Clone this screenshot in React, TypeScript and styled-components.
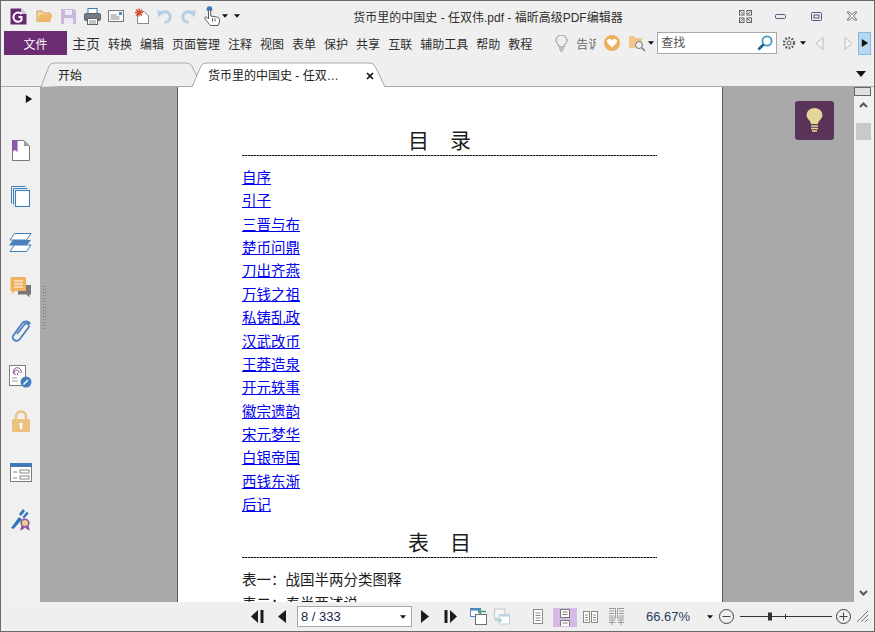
import React from "react";
import styled, { createGlobalStyle } from "styled-components";

const Global = createGlobalStyle`
  html, body { margin: 0; padding: 0; background: #efefef; overflow: hidden; }
  * { box-sizing: border-box; }
`;

const UI_FONT = `"Liberation Sans", "Noto Sans CJK SC", sans-serif`;
const DOC_FONT = `"Liberation Serif", "Noto Sans CJK SC", serif`;

const Win = styled.div`
  width: 875px; height: 632px; border: 1px solid #6a6a6a; background: #efefef;
  display: flex; flex-direction: column; font-family: ${UI_FONT}; color: #333; overflow: hidden;
`;
const TitleRow = styled.div`height: 30px; display: flex; align-items: center; flex: none;`;
const Slot = styled.span<{ $w: number; $ml?: number; $active?: boolean }>`
  display: flex; align-items: center; justify-content: center; flex: none;
  width: ${p => p.$w}px; margin-left: ${p => p.$ml ?? 0}px;
  align-self: ${p => (p.$active ? "flex-start" : "stretch")};
  height: ${p => (p.$active ? "19px" : "auto")};
  margin-top: ${p => (p.$active ? "6px" : "0")};
  overflow: ${p => (p.$active ? "hidden" : "visible")};
  background: ${p => (p.$active ? "#d6b9e6" : "transparent")};
`;
const Title = styled.div`
  width: 272px; margin-left: 112px; flex: none; font-size: 12px; white-space: nowrap; color: #2e2e2e; text-align: center;
`;
const MenuRow = styled.div`height: 24px; display: flex; align-items: center; flex: none; padding-left: 3px;`;
const FileButton = styled.div`
  width: 63px; height: 24px; background: #6b2c72; color: #fff; font-size: 12px;
  display: flex; align-items: center; justify-content: center; flex: none;
`;
const Menus = styled.div`display: flex; gap: 8px; margin-left: 5px; align-items: center;`;
const Menu = styled.span<{ $big?: boolean }>`font-size: ${p => (p.$big ? 14 : 12)}px; white-space: nowrap; color: #2f2f2f;`;
const Clip = styled.span`
  width: 20px; margin-left: 8px; overflow: hidden; white-space: nowrap; font-size: 12px; color: #666; flex: none;
`;
const SearchBox = styled.label`
  width: 120px; height: 22px; border: 1px solid #a8a8a8; background: #fff; flex: none;
  display: flex; align-items: center; padding: 0 3px 0 3px; margin-left: 3px;
`;
const SearchInput = styled.input`
  flex: 1; min-width: 0; border: 0; outline: 0; padding: 0; background: transparent; font: 12px ${UI_FONT};
  &::placeholder { color: #555; opacity: 1; }
`;
const Collapse = styled.div`
  width: 13px; height: 23px; margin-left: 5px; flex: none; background: #b5d9f5; border: 1px solid #8ab9de;
  display: flex; align-items: center; justify-content: center;
`;
const TabRow = styled.div`
  height: 32px; flex: none; display: flex; align-items: flex-end; padding-left: 39px; position: relative;
  border-bottom: 1px solid #a9a9a9;
`;
const Tab = styled.div<{ $w: number; $ml?: number; $active?: boolean }>`
  position: relative; width: ${p => p.$w}px; height: 25px; flex: none; margin-left: ${p => p.$ml ?? 0}px;
  margin-bottom: -1px; font-size: 12px; color: #222; display: flex; align-items: center; z-index: ${p => (p.$active ? 2 : 1)};
`;
const TabShape = styled.svg`position: absolute; inset: 0; width: 100%; height: 100%;`;
const TabLabel = styled.span<{ $pl: number }>`position: relative; padding-left: ${p => p.$pl}px; white-space: nowrap;`;
const TabClose = styled.span`position: absolute; right: 11px; top: 10px; display: flex;`;
const TabMenu = styled.span`position: absolute; right: 8px; top: 14px; display: flex;`;
const Main = styled.div`flex: 1; min-height: 0; display: flex; padding-right: 2px;`;
const Rail = styled.div`width: 39px; flex: none; background: #f0f0f0; display: flex; flex-direction: column;`;
const RailArrow = styled.div`height: 24px; display: flex; align-items: center; justify-content: flex-end; padding-right: 7px; margin-bottom: 16px;`;
const RailSlot = styled.div<{ $h: number }>`height: ${p => p.$h}px; display: flex; align-items: center; justify-content: center;`;
const Doc = styled.div`flex: 1; min-width: 0; background: #a9a9a9; position: relative; overflow: hidden;`;
const Grip = styled.div`
  position: absolute; left: 2px; top: 198px; width: 5px; height: 44px;
  background-image: radial-gradient(#6e6e6e 0.7px, transparent 0.8px);
  background-size: 2.5px 3px;
`;
const Page = styled.div`
  width: 546px; height: 100%; margin-left: 137px; background: #fff; border: solid #5a5a5a; border-width: 0 1px;
  padding: 41px 64px 0 64px; font-family: ${DOC_FONT}; color: #1d1d1d;
`;
const Heading = styled.div<{ $mt?: number }>`
  width: 415px; height: 28px; margin-top: ${p => p.$mt ?? 0}px; padding-right: 20px; font-size: 21px; line-height: 27px; text-align: center;
  background: repeating-linear-gradient(90deg, #111 0 2px, #8a8a8a 2px 3px) bottom / 100% 1px no-repeat;
`;
const LinkList = styled.div`margin-top: 11px; display: flex; flex-direction: column;`;
const DocLink = styled.a`height: 23.36px; line-height: 23.36px; font-size: 14.5px; color: #0000ee; text-decoration: underline; width: max-content;`;
const DocLine = styled.div<{ $mt?: number }>`height: 23.36px; line-height: 23.36px; font-size: 14.5px; margin-top: ${p => p.$mt ?? 0}px; white-space: nowrap;`;
const Hint = styled.div`
  position: absolute; left: 755px; top: 14px; width: 39px; height: 39px; border-radius: 3px; background: #5a3358;
  display: flex; align-items: center; justify-content: center;
`;
const Scroll = styled.div`width: 18px; flex: none; background: #f0f0f0; display: flex; flex-direction: column; align-items: center;`;
const ScrollSplit = styled.div`width: 17px; height: 9px; margin-top: 0; background: #e0e0e0; border: 1px solid #666; align-self: flex-start;`;
const ScrollArrow = styled.div`height: 18px; display: flex; align-items: center; justify-content: center;`;
const ScrollThumb = styled.div`width: 15px; height: 17px; margin-top: 9px; background: #c9c9c9;`;
const ScrollTrack = styled.div`flex: 1;`;
const Status = styled.div`height: 29px; flex: none; display: flex; align-items: stretch; padding-left: 246px; background: #efefef; font-size: 13px;`;
const PageBox = styled.div`
  width: 115px; flex: none; height: 21px; align-self: center; border: 1px solid #a8a8a8; background: #fff; color: #16264a;
  display: flex; align-items: center; justify-content: space-between; padding: 0 5px 0 3px; font-size: 13px;
`;
const Zoom = styled.span`width: 44px; margin-left: 18px; flex: none; align-self: center; color: #2c3d5c; font-size: 13px; white-space: nowrap;`;

const Tri = ({ d = "r", s = 8, c = "#111" }: { d?: "r" | "l" | "d" | "u"; s?: number; c?: string }) => {
  const pts = { r: "1,0 9,5 1,10", l: "9,0 1,5 9,10", d: "0,2 10,2 5,8", u: "0,8 10,8 5,2" }[d];
  return <svg width={s} height={s} viewBox="0 0 10 10"><polygon points={pts} fill={c} /></svg>;
};
const Svg = ({ w, h, children }: { w: number; h: number; children: React.ReactNode }) => (
  <svg width={w} height={h} viewBox={`0 0 ${w} ${h}`} fill="none">{children}</svg>
);

const Logo = () => (
  <Svg w={17} h={17}>
    <path d="M0.5 0.5H11L16.5 6V16.5H0.5Z" fill="#652a70" />
    <path d="M11 .5L16.5 6H11Z" fill="#d8c4dc" />
    <path d="M11.5 6.2A4.6 4.6 0 1 0 11.5 12.2V9H8.5" stroke="#fff" strokeWidth="2" />
  </Svg>
);
const Folder = () => (
  <Svg w={17} h={14}>
    <path d="M1 13V2h5l1.5 2H14v2" stroke="#cfa056" fill="#f4d79f" />
    <path d="M1 13l3-7.5h12.5L14 13Z" fill="#eeb868" />
  </Svg>
);
const Save = () => (
  <Svg w={15} h={15}>
    <path d="M0 0H13L15 2V15H0Z" fill="#c9b6d8" />
    <rect x="4" y="1" width="7" height="5" fill="#efe9f3" />
    <rect x="3" y="9" width="9" height="6" fill="#efe9f3" />
  </Svg>
);
const Print = () => (
  <Svg w={17} h={17}>
    <rect x="4" y="0.5" width="9" height="5" fill="#fff" stroke="#3e79b8" />
    <rect x="0.5" y="5.5" width="16" height="7" rx="1" fill="#757b82" stroke="#5d6369" />
    <rect x="3.5" y="10.5" width="10" height="6" fill="#fff" stroke="#5d6369" />
    <path d="M5 13h7M5 15h7" stroke="#8a8a8a" />
  </Svg>
);
const Mail = () => (
  <Svg w={16} h={12}>
    <rect x="0.5" y="0.5" width="15" height="11" fill="#fbfbfb" stroke="#777" />
    <rect x="11" y="2" width="3" height="3" fill="#5586bf" />
    <path d="M2.5 5h6M2.5 7h9M2.5 9h9" stroke="#8a8a8a" />
  </Svg>
);
const NewDoc = () => (
  <Svg w={15} h={16}>
    <path d="M3.5 3.5H10L14.5 8V15.5H3.5Z" fill="#fff" stroke="#888" />
    <path d="M5 .5v8M1 4.5h8M2 1.5l6 6M8 1.5l-6 6" stroke="#d9502c" strokeWidth="1.4" />
  </Svg>
);
const Undo = ({ flip }: { flip?: boolean }) => (
  <svg width="16" height="15" viewBox="0 0 16 15" fill="none" style={flip ? { transform: "scaleX(-1)" } : undefined}>
    <path d="M3.500 5A5.300 5.300 0 1 1 7.500 13.300" stroke="#b9cfe6" strokeWidth="3" />
    <path d="M0 1.500L7.500 2 1.500 8.500Z" fill="#b9cfe6" />
  </svg>
);
const Hand = () => (
  <Svg w={16} h={20}>
    <circle cx="5.500" cy="3" r="2.800" fill="#3d79b6" />
    <path d="M4.500 9V5.200c0-1.600 2.200-1.600 2.200 0V10l6 1c1.700.3 2.800 1.100 2.800 2.600V16l-1.500 3.500H6.500L1 13c-1-1.500.8-2.800 2-1.500L4.500 13Z" fill="#fff" stroke="#5b5b5b" />
    <path d="M8.500 12v3.500M11 12.500v3" stroke="#5b5b5b" />
  </Svg>
);
const Expand = () => (
  <svg width="13" height="13" viewBox="0 0 13 13" fill="none" stroke="#666">
    <rect x="0.5" y="0.5" width="4.5" height="4.5" /><rect x="8" y="0.5" width="4.5" height="4.5" />
    <rect x="0.5" y="8" width="4.5" height="4.5" /><rect x="8" y="8" width="4.5" height="4.5" />
    <path d="M1.5 1.5l2.5 2.5M11.5 1.5L9 4M1.5 11.5L4 9M11.5 11.5L9 9" />
  </svg>
);
const Minimize = () => <Svg w={11} h={5}><rect x="0.5" y="0.5" width="10" height="4" rx="1" stroke="#4e5d7a" /></Svg>;
const Restore = () => (
  <Svg w={11} h={9}><rect x="0.5" y="0.5" width="10" height="8" rx="1" stroke="#4e5d7a" /><rect x="3" y="3" width="5" height="3" stroke="#4e5d7a" /></Svg>
);
const CloseWin = () => (
  <Svg w={12} h={10}><path d="M1 1h2.5L6 3.5 8.5 1H11L7.5 5 11 9H8.5L6 6.5 3.5 9H1L4.5 5Z" fill="#fff" stroke="#6a6a6a" /></Svg>
);
const Bulb = ({ c = "#8b8b8b" }: { c?: string }) => (
  <Svg w={13} h={17}>
    <path d="M4 12C4 9 1 8.500 1 5.500A5.500 5.500 0 0 1 12 5.500C12 8.500 9 9 9 12Z" stroke={c} />
    <path d="M4 14h5M5 16h3" stroke={c} />
  </Svg>
);
const Heart = () => (
  <Svg w={16} h={16}>
    <circle cx="8" cy="8" r="8" fill="#edb05e" />
    <path d="M8 12.500L3.500 8C2 6 3.500 4 5.500 4 6.700 4 7.500 4.700 8 5.500 8.500 4.700 9.300 4 10.500 4 12.500 4 14 6 12.500 8Z" fill="#fff" />
  </Svg>
);
const FolderFind = () => (
  <Svg w={17} h={17}>
    <path d="M0 13V1h5l1.500 2H13v7H8L6 13Z" fill="#edc78b" />
    <circle cx="10" cy="10" r="3.500" fill="#efefef" stroke="#777" />
    <path d="M12.500 12.500L16 16" stroke="#777" strokeWidth="1.400" />
  </Svg>
);
const Lens = () => (
  <Svg w={16} h={16}>
    <circle cx="10" cy="6" r="4.600" stroke="#3d9bc6" strokeWidth="1.800" />
    <path d="M6.500 9.500L1.500 14.500" stroke="#25598f" strokeWidth="2.600" />
  </Svg>
);
const Gear = () => (
  <Svg w={14} h={14}>
    <circle cx="7" cy="7" r="2" stroke="#555" />
    <circle cx="7" cy="7" r="5" stroke="#555" strokeWidth="2.400" strokeDasharray="1.600 1.600" />
  </Svg>
);
const Outline = ({ left }: { left?: boolean }) => (
  <Svg w={9} h={13}>
    <polygon points={left ? "8,0.500 8,12.500 1,6.500" : "1,0.500 1,12.500 8,6.500"} stroke="#bdbdbd" fill="#f4f4f4" />
  </Svg>
);
const XMark = () => <Svg w={8} h={8}><path d="M1 1l6 6M7 1L1 7" stroke="#111" strokeWidth="1.700" /></Svg>;

const RBookmark = () => (
  <Svg w={18} h={21}>
    <path d="M.5 0.500H12L17.500 6V20.500H.5Z" fill="#fff" stroke="#7a7a7a" />
    <path d="M12 .5V6H17.500Z" fill="#9b9b9b" />
    <path d="M0 0H5.500V12L2.800 10 0 12Z" fill="#8c55a8" />
  </Svg>
);
const RPages = () => (
  <svg width="19" height="21" viewBox="0 0 19 21" fill="none" stroke="#3f7fbd">
    <path d="M.5 17.500V.5H14.500" /><path d="M2.500 18.500V2.500H16.500" />
    <rect x="4.500" y="4.500" width="14" height="16" fill="#fff" strokeWidth="1.100" />
  </svg>
);
const RLayers = () => (
  <Svg w={23} h={19}>
    <path d="M5.500 .5H22L17.500 7H1Z" fill="#fff" stroke="#3f7fbd" />
    <path d="M4 7H22L17.500 12.500H0Z" fill="#4d80ba" />
    <path d="M5.500 12H22L17.500 18.500H1Z" fill="#fff" stroke="#3f7fbd" />
  </Svg>
);
const RComment = () => (
  <Svg w={22} h={21}>
    <path d="M8 8H21V17.500H19.500V20.500L16.500 17.500H8Z" fill="#777" />
    <path d="M.5 0H16V14H5L2 17V14H.5Z" fill="#efb25f" />
    <path d="M4 4H13M4 7H13M4 10H13" stroke="#fff" />
  </Svg>
);
const RClip = () => (
  <Svg w={20} h={23}>
    <path d="M6 14L13.500 4.500C15.500 2 19 4.500 17.500 7.500L8.500 19.500C6 22.500 .5 20 2 16L11 3.500C13 .5 18 1 19 4" stroke="#4b82be" strokeWidth="1.800" />
  </Svg>
);
const RSign = () => (
  <Svg w={23} h={23}>
    <rect x="0.500" y="0.500" width="16" height="20" fill="#fff" stroke="#7c7c7c" />
    <path d="M5 9A4 4 0 1 1 12 8M7 10A2.500 2.500 0 1 1 10 8M8.500 8V10" stroke="#8c55a8" />
    <path d="M3 13H8M3 16H9" stroke="#999" />
    <circle cx="17" cy="17" r="5.500" fill="#3f7fbd" />
    <path d="M14.500 19.500L19 15" stroke="#fff" strokeWidth="1.500" />
  </Svg>
);
const RLock = () => (
  <Svg w={18} h={22}>
    <path d="M4 10V6.500A5 5 0 0 1 14 6.500V10" stroke="#ecc27f" strokeWidth="2.500" />
    <rect x="0" y="9" width="18" height="13" rx="1.500" fill="#ecc27f" />
    <path d="M7.500 13H10.500L10 19H8Z" fill="#fff" />
  </Svg>
);
const RForm = () => (
  <Svg w={22} h={19}>
    <rect x="0.500" y="0.500" width="21" height="18" fill="#fff" stroke="#7c7c7c" />
    <rect width="22" height="4" fill="#4279b6" />
    <rect x="10" y="7" width="9" height="3" stroke="#8a8a8a" /><rect x="10" y="13" width="9" height="3" stroke="#8a8a8a" />
    <path d="M3 9H7M3 15H7" stroke="#8a8a8a" />
  </Svg>
);
const RSeal = () => (
  <Svg w={21} h={23}>
    <path d="M1 20L9 9 12 11.500 3.500 21Z" fill="#2f75b8" />
    <path d="M9 6L13 1 15 3 11 8ZM12.500 9L17 3.500 18.500 5.500 14 10.500Z" fill="#2f75b8" />
    <circle cx="15" cy="15" r="3.800" fill="#e7d27e" stroke="#8c55a8" strokeWidth="1.600" />
    <path d="M11.500 18L10 22.500 13.500 21 15 19 16.500 21 20 22.500 18.500 18Z" fill="#8c55a8" />
  </Svg>
);
const HintBulb = () => (
  <Svg w={17} h={25}>
    <path d="M5 16C5 12.500 .5 11 .5 7A8 7 0 0 1 16.500 7C16.500 11 12 12.500 12 16Z" fill="#e2d69a" />
    <path d="M5 18H12M5 20.500H12" stroke="#e2d69a" strokeWidth="1.600" /><path d="M6 23H11" stroke="#e2d69a" strokeWidth="1.600" />
  </Svg>
);
const Chevron = ({ up }: { up?: boolean }) => (
  <Svg w={9} h={6}><path d={up ? "M1 5L4.500 1.500 8 5" : "M1 1L4.500 4.500 8 1"} stroke="#555" strokeWidth="2" /></Svg>
);

const First = ({ flip }: { flip?: boolean }) => (
  <svg width="13" height="13" viewBox="0 0 13 13" style={flip ? { transform: "scaleX(-1)" } : undefined}>
    <polygon points="7,0 7,13 0,6.500" fill="#1d1d1d" /><rect x="9.500" y="0" width="3" height="13" fill="#1d1d1d" />
  </svg>
);
const Prev = ({ flip }: { flip?: boolean }) => (
  <svg width="8" height="13" viewBox="0 0 8 13" style={flip ? { transform: "scaleX(-1)" } : undefined}>
    <polygon points="8,0 8,13 0,6.500" fill="#1d1d1d" />
  </svg>
);
const ViewBack = () => (
  <Svg w={17} h={17}>
    <rect x="0.500" y="0.500" width="10" height="8" fill="#fff" stroke="#4f86c0" />
    <rect x="0.500" y="0.500" width="10" height="2" fill="#4f86c0" />
    <rect x="5.500" y="6.500" width="11" height="10" fill="#fff" stroke="#6e6e6e" />
    <path d="M8 3.500H16M8 3.500L11 1M8 3.500L11 6" stroke="#4f9c8c" strokeWidth="1.500" />
  </Svg>
);
const ViewFwd = () => (
  <Svg w={17} h={17}>
    <rect x="0.500" y="0.500" width="11" height="10" fill="#f6f6f6" stroke="#c4c4c4" />
    <rect x="5.500" y="6.500" width="11" height="10" fill="#fff" stroke="#bcd0e6" />
    <rect x="5.500" y="6.500" width="11" height="2" fill="#bcd0e6" />
    <path d="M1 12.500H8M8 12.500L5.500 10.500M8 12.500L5.500 14.500" stroke="#a9d3c7" strokeWidth="1.500" />
  </Svg>
);
const Lines = "M2.500 4H7.500M2.500 6.500H7.500M2.500 9H7.500M2.500 11.500H7.500";
const VSingle = () => (
  <Svg w={10} h={15}><rect x="0.500" y="0.500" width="9" height="14" stroke="#8a8a8a" fill="#fff" /><path d={Lines} stroke="#8a8a8a" /></Svg>
);
const VCont = () => (
  <Svg w={10} h={17}>
    <rect x="0.500" y="0.500" width="9" height="8" stroke="#777" fill="#fff" /><path d="M2.500 3H7.500M2.500 5.500H7.500" stroke="#777" />
    <path d="M0.500 17V11.500H9.500V17M2.500 14H7.500" stroke="#777" fill="#fff" />
  </Svg>
);
const VFacing = () => (
  <Svg w={15} h={12}>
    <rect x="0.500" y="0.500" width="6" height="11" stroke="#8a8a8a" fill="#fff" /><rect x="8.500" y="0.500" width="6" height="11" stroke="#8a8a8a" fill="#fff" />
    <path d="M2 4H5M2 6.500H5M2 9H5M10 4H13M10 6.500H13M10 9H13" stroke="#8a8a8a" />
  </Svg>
);
const VFacingCont = () => (
  <Svg w={15} h={17}>
    <path d="M0 .5H6.500V10H0M0 3H5M0 5.500H5M0 8H5M8.500 .5H15M8.500 .5V10H15M10 3H15M10 5.500H15M10 8H15M0 12H6.500M8.500 12H15M3 12V17M12 12V17M0 14.500H6.500M8.500 14.500H15" stroke="#9a9a9a" />
  </Svg>
);
const Round = ({ plus }: { plus?: boolean }) => (
  <Svg w={15} h={15}>
    <circle cx="7.500" cy="7.500" r="7" stroke="#444" />
    <path d={plus ? "M3.500 7.500H11.500M7.500 3.500V11.500" : "M3.500 7.500H11.500"} stroke="#444" />
  </Svg>
);
const SliderArt = () => (
  <Svg w={92} h={9}>
    <path d="M0 4.500H92" stroke="#333" />
    <rect x="28" y="0.500" width="4" height="8" fill="#333" />
    <path d="M45.500 2V7" stroke="#333" />
  </Svg>
);
const SizeGrip = () => (
  <Svg w={13} h={13}><path d="M1 12L12 1M5 12L12 5M9 12L12 9" stroke="#777" /></Svg>
);

const links = ["自序","引子","三晋与布","楚币问鼎","刀出齐燕","万钱之祖","私铸乱政","汉武改币","王莽造泉","开元轶事","徽宗遗韵","宋元梦华","白银帝国","西钱东渐","后记"];
const menus = ["转换","编辑","页面管理","注释","视图","表单","保护","共享","互联","辅助工具","帮助","教程"];

export default function App() {
  return (
    <Win>
      <Global />
      <TitleRow>
        <Slot $w={17} $ml={9}><Logo /></Slot>
        <Slot $w={18} $ml={8}><Folder /></Slot>
        <Slot $w={16} $ml={7}><Save /></Slot>
        <Slot $w={18} $ml={7}><Print /></Slot>
        <Slot $w={16} $ml={7}><Mail /></Slot>
        <Slot $w={16} $ml={9}><NewDoc /></Slot>
        <Slot $w={16} $ml={8}><Undo /></Slot>
        <Slot $w={16} $ml={7}><Undo flip /></Slot>
        <Slot $w={16} $ml={8}><Hand /></Slot>
        <Slot $w={6} $ml={2}><Tri d="d" s={6} /></Slot>
        <Slot $w={6} $ml={6}><Tri d="d" s={6} /></Slot>
        <Title>货币里的中国史 - 任双伟.pdf - 福昕高级PDF编辑器</Title>
        <Slot $w={14} $ml={114}><Expand /></Slot>
        <Slot $w={12} $ml={22}><Minimize /></Slot>
        <Slot $w={12} $ml={24}><Restore /></Slot>
        <Slot $w={12} $ml={24}><CloseWin /></Slot>
      </TitleRow>
      <MenuRow>
        <FileButton>文件</FileButton>
        <Menus>
          <Menu $big>主页</Menu>
          {menus.map(m => <Menu key={m}>{m}</Menu>)}
        </Menus>
        <Slot $w={14} $ml={22}><Bulb /></Slot>
        <Clip>告诉我</Clip>
        <Slot $w={16} $ml={8}><Heart /></Slot>
        <Slot $w={17} $ml={9}><FolderFind /></Slot>
        <Slot $w={6} $ml={2}><Tri d="d" s={6} /></Slot>
        <SearchBox>
          <SearchInput placeholder="查找" aria-label="查找" />
          <Lens />
        </SearchBox>
        <Slot $w={14} $ml={5}><Gear /></Slot>
        <Slot $w={6} $ml={4}><Tri d="d" s={6} /></Slot>
        <Slot $w={9} $ml={9}><Outline left /></Slot>
        <Slot $w={9} $ml={20}><Outline /></Slot>
        <Collapse><Tri d="r" s={8} /></Collapse>
      </MenuRow>
      <TabRow>
        <Tab $w={158}>
          <TabShape viewBox="0 0 158 25" preserveAspectRatio="none" fill="none">
            <path d="M1 25L9 4Q10.500 1 14 1H146Q150 1 152 4L158 17" stroke="#a9a9a9" fill="#efefef" />
          </TabShape>
          <TabLabel $pl={18}>开始</TabLabel>
        </Tab>
        <Tab $w={193} $ml={-6} $active>
          <TabShape viewBox="0 0 193 25" preserveAspectRatio="none" fill="none">
            <path d="M0 25L9 4Q10.500 1 14 1H178Q181 1 183 4L193 25" stroke="#a9a9a9" fill="#fff" />
          </TabShape>
          <TabLabel $pl={16}>货币里的中国史 - 任双…</TabLabel>
          <TabClose><XMark /></TabClose>
        </Tab>
        <TabMenu><Tri d="d" s={10} /></TabMenu>
      </TabRow>
      <Main>
        <Rail>
          <RailArrow><Tri d="r" s={8} /></RailArrow>
          <RailSlot $h={46}><RBookmark /></RailSlot>
          <RailSlot $h={46}><RPages /></RailSlot>
          <RailSlot $h={46}><RLayers /></RailSlot>
          <RailSlot $h={44}><RComment /></RailSlot>
          <RailSlot $h={44}><RClip /></RailSlot>
          <RailSlot $h={46}><RSign /></RailSlot>
          <RailSlot $h={44}><RLock /></RailSlot>
          <RailSlot $h={58}><RForm /></RailSlot>
          <RailSlot $h={36}><RSeal /></RailSlot>
        </Rail>
        <Doc>
          <Grip />
          <Page>
            <Heading>目　录</Heading>
            <LinkList>
              {links.map(l => <DocLink key={l}>{l}</DocLink>)}
            </LinkList>
            <Heading $mt={13}>表　目</Heading>
            <DocLine $mt={11}>表一：战国半两分类图释</DocLine>
            <DocLine>表二：秦半两述说</DocLine>
          </Page>
          <Hint><HintBulb /></Hint>
        </Doc>
        <Scroll>
          <ScrollSplit />
          <ScrollArrow><Chevron up /></ScrollArrow>
          <ScrollThumb />
          <ScrollTrack />
          <ScrollArrow><Chevron /></ScrollArrow>
        </Scroll>
      </Main>
      <Status>
        <Slot $w={20}><First /></Slot>
        <Slot $w={30}><Prev /></Slot>
        <PageBox>8 / 333<Tri d="d" s={6} /></PageBox>
        <Slot $w={26}><Prev flip /></Slot>
        <Slot $w={24}><First flip /></Slot>
        <Slot $w={32}><ViewBack /></Slot>
        <Slot $w={16}><ViewFwd /></Slot>
        <Slot $w={24} $ml={16}><VSingle /></Slot>
        <Slot $w={24} $ml={3} $active><VCont /></Slot>
        <Slot $w={24} $ml={1}><VFacing /></Slot>
        <Slot $w={24} $ml={2}><VFacingCont /></Slot>
        <Zoom>66.67%</Zoom>
        <Slot $w={8} $ml={16}><Tri d="d" s={6} /></Slot>
        <Slot $w={20} $ml={2}><Round /></Slot>
        <Slot $w={92} $ml={4}><SliderArt /></Slot>
        <Slot $w={20} $ml={1}><Round plus /></Slot>
        <Slot $w={16} $ml={1}><SizeGrip /></Slot>
      </Status>
    </Win>
  );
}
